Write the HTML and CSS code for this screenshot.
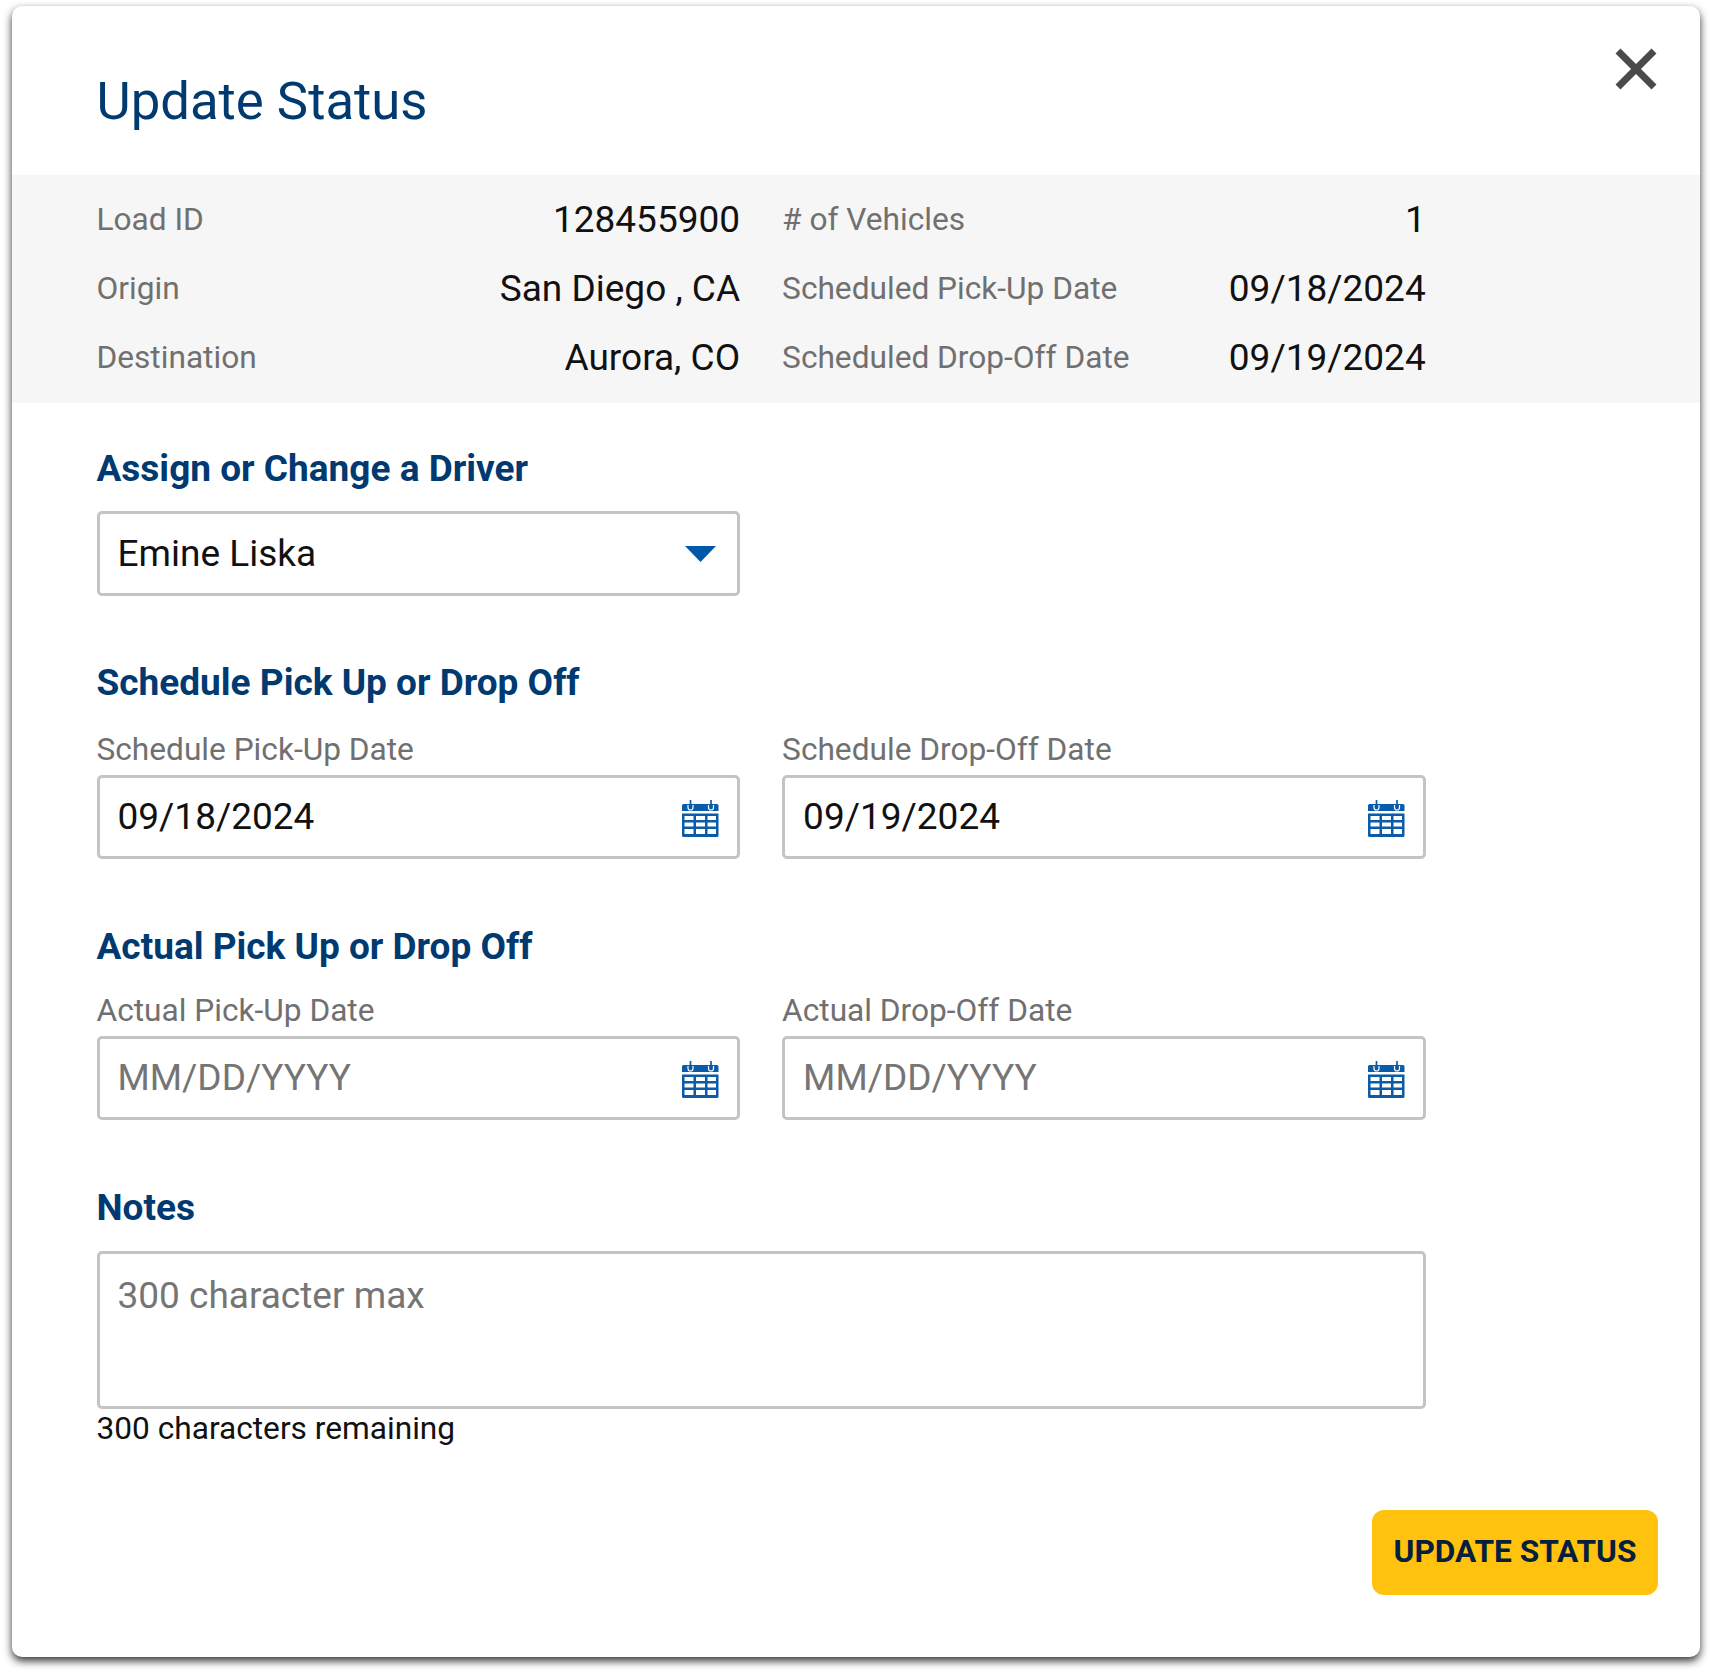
FILE: index.html
```html
<!DOCTYPE html>
<html lang="en">
<head>
<meta charset="utf-8">
<title>Update Status</title>
<link rel="stylesheet" href="styles.css">
</head>
<body>
<main class="modal">
  <button class="close" aria-label="Close">
    <svg width="42" height="42" viewBox="0 0 42 42"><path d="M3 3 39 39M39 3 3 39" stroke="#4a4a4a" stroke-width="7" fill="none"/></svg>
  </button>
  <h1 class="title">Update Status</h1>
  <section class="summary">
    <div class="row"><span class="key">Load ID</span><span class="val">128455900</span></div>
    <div class="row"><span class="key"># of Vehicles</span><span class="val">1</span></div>
    <div class="row"><span class="key">Origin</span><span class="val">San Diego , CA</span></div>
    <div class="row"><span class="key">Scheduled Pick-Up Date</span><span class="val">09/18/2024</span></div>
    <div class="row"><span class="key">Destination</span><span class="val">Aurora, CO</span></div>
    <div class="row"><span class="key">Scheduled Drop-Off Date</span><span class="val">09/19/2024</span></div>
  </section>
  <section class="form">
    <h2 class="h h-driver">Assign or Change a Driver</h2>
    <div class="grid">
      <div class="field select"><span class="ftext">Emine Liska</span>
        <svg class="caret" width="31" height="16" viewBox="0 0 31 16"><path d="M0 0H31L15.5 16Z" fill="#0059a8"/></svg>
      </div>
    </div>
    <h2 class="h h-sched">Schedule Pick Up or Drop Off</h2>
    <div class="grid">
      <div>
        <div class="label">Schedule Pick-Up Date</div>
        <div class="field"><span class="ftext">09/18/2024</span>
          <svg class="cal" width="38" height="37" viewBox="0 0 38 37"><use href="#cal"/></svg>
        </div>
      </div>
      <div>
        <div class="label">Schedule Drop-Off Date</div>
        <div class="field"><span class="ftext">09/19/2024</span>
          <svg class="cal" width="38" height="37" viewBox="0 0 38 37"><use href="#cal"/></svg>
        </div>
      </div>
    </div>
    <h2 class="h h-actual">Actual Pick Up or Drop Off</h2>
    <div class="grid">
      <div>
        <div class="label">Actual Pick-Up Date</div>
        <div class="field ph"><span class="ftext">MM/DD/YYYY</span>
          <svg class="cal" width="38" height="37" viewBox="0 0 38 37"><use href="#cal"/></svg>
        </div>
      </div>
      <div>
        <div class="label">Actual Drop-Off Date</div>
        <div class="field ph"><span class="ftext">MM/DD/YYYY</span>
          <svg class="cal" width="38" height="37" viewBox="0 0 38 37"><use href="#cal"/></svg>
        </div>
      </div>
    </div>
    <h2 class="h h-notes">Notes</h2>
    <div class="area">300 character max</div>
    <p class="remain">300 characters remaining</p>
  </section>
  <footer class="foot"><button class="submit">UPDATE STATUS</button></footer>
</main>
<svg class="defs" width="0" height="0" aria-hidden="true">
  <defs>
    <g id="cal">
      <path d="M1 5.5a1.500 1.500 0 0 1 1.500-1.500H36a1.500 1.500 0 0 1 1.500 1.500V11H1Z" fill="#0a5ba8"/>
      <path d="M7 5V7.500a2.500 2.500 0 0 0 5 0V5M27.500 5V7.500a2.500 2.500 0 0 0 5 0V5" stroke="#fff" stroke-width="1.200" fill="none"/>
      <path d="M9.500 0V8.500M30 0V8.500" stroke="#0a5ba8" stroke-width="1.700"/>
      <path fill-rule="evenodd" d="M1 13.500H37.500V35.500a1.500 1.500 0 0 1-1.500 1.500H2.500A1.500 1.500 0 0 1 1 35.500ZM3.500 16V20H12.500V16ZM15 16V20H24V16ZM26.500 16V20H35V16ZM3.500 22.500V26.500H12.500V22.500ZM15 22.500V26.500H24V22.500ZM26.500 22.500V26.500H35V22.500ZM3.500 29V34H12.500V29ZM15 29V34H24V29ZM26.500 29V34H35V29Z" fill="#0a5ba8"/>
    </g>
  </defs>
</svg>
</body>
</html>
```
FILE: styles.css
```css
* { box-sizing: border-box; }
html, body { margin: 0; background: #fff; }
body { padding: 6px 10px 16px 12px; font-family: Roboto, "Liberation Sans", sans-serif; }
.defs { position: absolute; }
.modal {
  position: relative;
  width: 1688px;
  height: 1651px;
  background: #fff;
  border-radius: 10px;
  box-shadow: 0 4px 8px rgba(0,0,0,.8);
}
.close {
  position: absolute;
  top: 42px;
  right: 43px;
  padding: 0;
  border: 0;
  background: none;
  line-height: 0;
}
.title {
  margin: 0;
  padding: 21px 84.5px 0;
  height: 169px;
  display: flex;
  align-items: center;
  font-size: 52.7px;
  font-weight: 400;
  color: #003a70;
}
.summary {
  height: 228px;
  padding: 10px 84.5px 8px;
  background: #f6f6f6;
  display: grid;
  grid-template-columns: 643.6px 643.6px;
  column-gap: 42px;
  grid-auto-rows: 69px;
}
.row { display: flex; justify-content: space-between; align-items: center; }
.key { font-size: 31.65px; color: #707070; }
.val { font-size: 37px; color: #111; }
.form { padding: 0 274px 0 84.5px; }
.h { margin: 0; font-size: 37px; font-weight: 700; color: #003a70; line-height: 44px; }
.h-driver { padding-top: 44px; margin-bottom: 20px; }
.h-sched { padding-top: 65px; margin-bottom: 23px; }
.h-actual { padding-top: 66px; margin-bottom: 20px; }
.h-notes { padding-top: 65.5px; margin-bottom: 21px; }
.grid { display: grid; grid-template-columns: 643.6px 643.6px; column-gap: 42px; }
.label { font-size: 31.65px; line-height: 44px; color: #707070; margin-bottom: 3px; }
.field {
  height: 84px;
  border: 3px solid #c4c4c4;
  border-radius: 5px;
  padding: 0 18px;
  display: flex;
  align-items: center;
  justify-content: space-between;
  font-size: 37px;
  color: #111;
}
.field.select { height: 85px; }
.ftext { margin-bottom: 1px; }
.caret { margin-right: 3px; }
.cal { margin-top: 2px; }
.field.ph { color: #757575; }
.area {
  height: 158px;
  border: 3px solid #c4c4c4;
  border-radius: 5px;
  padding: 20px 18px;
  font-size: 37px;
  line-height: 44px;
  color: #757575;
}
.remain { margin: 2px 0 0; font-size: 31.65px; line-height: 36px; color: #111; }
.foot { position: absolute; right: 42px; bottom: 62px; }
.submit {
  width: 286px;
  height: 85px;
  padding: 0 0 2px;
  border: 0;
  border-radius: 12px;
  background: #ffc20e;
  color: #05203f;
  font-family: inherit;
  font-size: 31.65px;
  font-weight: 700;
}
```
